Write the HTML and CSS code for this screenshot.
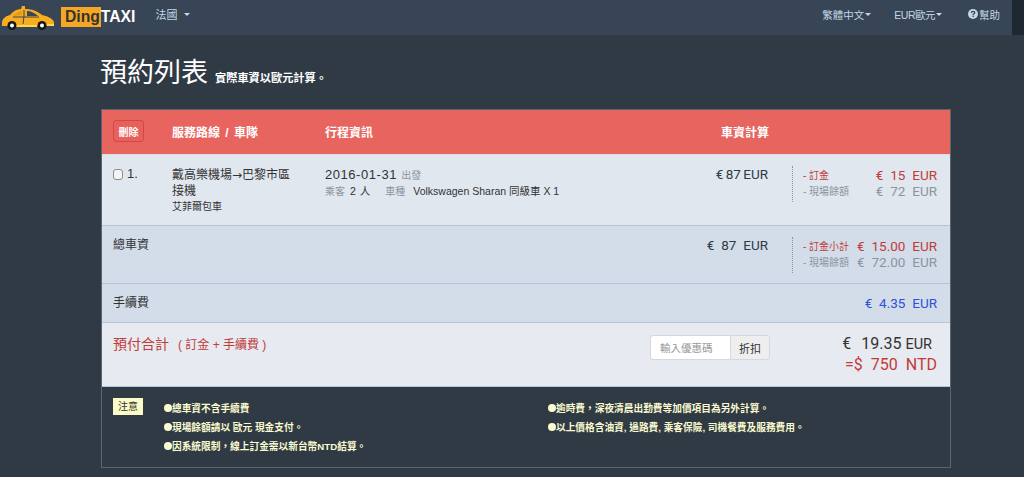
FILE: index.html
```html
<!DOCTYPE html>
<html lang="zh-Hant">
<head>
<meta charset="utf-8">
<title>預約列表</title>
<link rel="stylesheet" href="styles.css">
</head>
<body>
<div class="topbar">
  <nav class="nav">
    <a class="brand">
      <svg class="taxi" width="54" height="28" viewBox="0 0 54 28">
        <path d="M1 20 C2 16 5 14 9 13 C12 9 16 7 20 7 L21 4 L24 4 L24 7 C31 7 36 9 41 13 C46 14 51 16 53 20 L53 24 L1 24 Z" fill="#f7ad1e"/>
        <path d="M26 9 C30 9 34 11 37 14 L26 14 Z" fill="#38465a"/>
        <path d="M12 14 C15 11 18 9.500 21 9 L21 13 L12 14 Z" fill="#e8991a"/>
        <path d="M23 8 L23 14 L22 22 M12 15 L38 15" fill="none" stroke="#38465a" stroke-width="1"/>
        <path d="M14 23 L36 23 L36 25 L14 25 Z M46 22 L53 22 L53 24 L46 24 Z" fill="#ffd84a"/>
        <circle cx="11" cy="23.500" r="4.500" fill="#17171a"/><circle cx="11" cy="23.500" r="2" fill="#fff"/>
        <circle cx="41" cy="23.500" r="4.500" fill="#17171a"/><circle cx="41" cy="23.500" r="2" fill="#fff"/>
      </svg>
      <span class="logo"><span class="logo-ding">Ding</span><span class="logo-taxi">TAXI</span></span>
    </a>
    <a class="nav-link country">法國<i class="caret wide"></i></a>
    <div class="nav-right">
      <a class="nav-link">繁體中文<i class="caret"></i></a>
      <a class="nav-link eur-link">EUR歐元<i class="caret"></i></a>
      <a class="nav-link help-link"><svg class="help" width="10" height="10" viewBox="0 0 10 10"><circle cx="5" cy="5" r="5" fill="#c3d6e4"/><path d="M3.300 3.900 C3.400 2.800 4.100 2.300 5.100 2.300 C6.100 2.300 6.800 2.900 6.800 3.700 C6.800 4.800 5.200 4.800 5.200 6" fill="none" stroke="#374556" stroke-width="1.300"/><rect x="4.500" y="6.600" width="1.400" height="1.300" fill="#374556"/></svg>幫助</a>
    </div>
  </nav>
  <div class="strip"></div>
</div>

<main class="container">
  <h1 class="title">預約列表<small>實際車資以歐元計算。</small></h1>

  <section class="panel">
    <div class="row head">
      <div class="c-check"><button class="del">刪除</button></div>
      <div class="c-route">服務路線 / 車隊</div>
      <div class="c-trip">行程資訊</div>
      <div class="c-fare">車資計算</div>
    </div>

    <div class="row item">
      <div class="c-check num"><span class="box"></span>1.</div>
      <div class="c-route">
        <div class="route-name">戴高樂機場<span class="arrow">→</span>巴黎市區<br>接機</div>
        <div class="route-sub">艾菲爾包車</div>
      </div>
      <div class="c-trip">
        <div class="date">2016-01-31 <span class="muted">出發</span></div>
        <div class="info"><span class="muted">乘客</span><span class="pax">2 人</span><span class="muted gap">車種</span>Volkswagen Sharan 同級車 X 1</div>
      </div>
      <div class="c-fare amount tight">€ 87 EUR</div>
      <div class="c-split">
        <div class="line red"><span>- 訂金</span><b>€ 15 EUR</b></div>
        <div class="line grey"><span>- 現場餘額</span><b>€ 72 EUR</b></div>
      </div>
    </div>

    <div class="row total">
      <div class="c-label">總車資</div>
      <div class="c-fare amount spaced">€ 87 EUR</div>
      <div class="c-split">
        <div class="line red"><span>- 訂金小計</span><b>€ 15.00 EUR</b></div>
        <div class="line grey"><span>- 現場餘額</span><b>€ 72.00 EUR</b></div>
      </div>
    </div>

    <div class="row fee">
      <div class="c-label">手續費</div>
      <div class="fee-val">€ 4.35 EUR</div>
    </div>

    <div class="row pay">
      <div class="pay-label">預付合計<span>( 訂金 + 手續費 )</span></div>
      <div class="coupon"><input class="coupon-input" placeholder="輸入優惠碼"><button class="coupon-btn">折扣</button></div>
      <div class="pay-sum">
        <div class="eur">€<span class="eur-num">19.35</span><span class="eur-cur">EUR</span></div>
        <div class="ntd">=$ 750 NTD</div>
      </div>
    </div>

    <div class="notes">
      <span class="tag">注意</span>
      <ul class="note-col first">
        <li>總車資不含手續費</li>
        <li>現場餘額請以 歐元 現金支付。</li>
        <li>因系統限制，線上訂金需以新台幣NTD結算。</li>
      </ul>
      <ul class="note-col">
        <li>逾時費，深夜清晨出勤費等加價項目為另外計算。</li>
        <li>以上價格含油資, 過路費, 乘客保險, 司機餐費及服務費用。</li>
      </ul>
    </div>
  </section>
</main>
</body>
</html>
```
FILE: styles.css
```css
* { box-sizing: border-box; }
html, body { margin: 0; height: 100%; }
body {
  background: #2f3a45;
  font-family: "Liberation Sans", "Noto Sans CJK TC", sans-serif;
  font-size: 12px;
  color: #333;
  overflow: hidden;
}
.topbar { display: flex; height: 35px; }
.nav { flex: 1; display: flex; align-items: center; background: #374556; color: #c3d6e4; padding-left: 1px; }
.strip { width: 12px; background: #1e2833; }
.brand { display: flex; align-items: center; }
.taxi { display: block; margin-top: -4px; }
.logo { margin-left: 6px; font-size: 15.7px; font-weight: bold; display: flex; margin-top: -1px; }
.logo-ding { background: #f5a623; color: #333; padding: 0 1px 0 4px; height: 20px; line-height: 20px; }
.logo-taxi { color: #fff; line-height: 20px; }
.nav-link { font-size: 10.5px; color: #c3d6e4; display: flex; align-items: center; white-space: nowrap; }
.country { margin-left: 20px; margin-top: -7px; font-size: 11px; }
.nav-right { margin-left: auto; display: flex; gap: 23px; padding-right: 12px; margin-top: -7px; }
.eur-link { letter-spacing: -.5px; }
.help-link { margin-left: 3px; }
.caret { display: inline-block; border-top: 3px solid currentColor; border-left: 3px solid transparent; border-right: 3px solid transparent; margin-left: 1px; }
.caret.wide { margin-left: 7px; }
.help { margin-right: 1px; }

.container { padding: 0 73px 0 100px; }
.title { margin: 20px 0 17px; height: 37px; line-height: 37px; font-size: 27px; font-weight: 400; color: #fff; }
.title small { font-size: 11.2px; font-weight: 700; margin-left: 7px; color: #fff; }

.panel { width: 850px; margin-left: 1px; border: 1px solid #5a6672; }
.row { display: grid; grid-template-columns: 59px 153px 443px 24px 1fr; padding: 0 13px 0 11px; border-bottom: 1px solid #b6c5d5; }
.head { height: 45px; padding-bottom: 2px; background: #e8655f; color: #fff; font-weight: 700; font-size: 12px; align-items: center; border-bottom: 1px solid #d9dfe6; }
.head .c-route { word-spacing: 2px; }
.head .c-trip, .head .c-fare { grid-row: 1; grid-column: 3; }
.head .c-fare { text-align: right; margin-right: -1px; }
.del { width: 31px; height: 22px; padding: 0; background: #e8605a; border: 1px solid #cf4a46; border-radius: 3px; color: #fff; font: 700 10px "Liberation Sans", "Noto Sans CJK TC", sans-serif; }

.item { height: 71px; background: #e1e7ef; padding-top: 11px; }
.item .c-trip, .item .c-fare { grid-row: 1; grid-column: 3; }
.item .c-route { padding-top: 1px; }
.item .c-trip { padding-top: 1px; }
.amount { text-align: right; color: #2f3a45; font-family: Roboto, "Noto Sans CJK TC", sans-serif; font-size: 13.500px; line-height: 17px; }
.tight { word-spacing: -1px; }
.spaced { word-spacing: 3.500px; }
.num { font-size: 13px; display: flex; align-items: flex-start; gap: 4px; color: #333; line-height: 15px; }
.box { width: 10px; height: 11px; margin-top: 3px; background: #f4f4f4; border: 1px solid #8c8c8c; border-radius: 3px; flex: none; }
.route-name { font-size: 12px; line-height: 16px; color: #333; }
.arrow { font-family: "DejaVu Sans", sans-serif; font-size: 12px; }
.route-sub { font-size: 10px; line-height: 14px; color: #333; margin-top: 1px; }
.date { font-size: 13px; line-height: 16px; letter-spacing: .55px; color: #333; }
.info { font-size: 10.5px; line-height: 14px; color: #333; }
.muted { color: #8a94a0; font-size: 10px; letter-spacing: 0; }
.pax { margin-left: 5px; word-spacing: 1px; }
.gap { margin-left: 15px; margin-right: 8px; }

.c-split { grid-column: 5; border-left: 1px dotted #8a94a0; padding: 1px 0 0 10px; height: 36px; }
.line { display: flex; justify-content: space-between; align-items: center; height: 16px; font-size: 10px; }
.line span { margin-top: -2px; }
.line b { font-family: Roboto, "Noto Sans CJK TC", sans-serif; font-weight: 400; font-size: 13.500px; word-spacing: 3.500px; }
.red { color: #c23a3a; }
.grey { color: #8a94a0; }

.total { height: 58px; background: #d2dde9; padding-top: 11px; }
.c-label { font-size: 12px; color: #333; line-height: 17px; }
.total .c-label { grid-column: 1 / 3; grid-row: 1; }
.total .c-fare { grid-column: 3; grid-row: 1; }
.total .c-split { grid-row: 1; }

.fee { height: 39px; padding-top: 1px; background: #d2dde9; align-items: center; display: flex; justify-content: space-between; }
.fee-val { color: #2f50d8; font-family: Roboto, "Noto Sans CJK TC", sans-serif; font-size: 13.500px; word-spacing: 3.500px; margin-top: -2px; }

.pay { height: 64px; background: #e7eaf0; display: flex; align-items: flex-start; padding-top: 12px; }
.pay-label { color: #c23a3a; font-size: 14px; line-height: 18px; width: 537px; }
.pay-label span { font-size: 12px; margin-left: 9px; }
.coupon { display: flex; height: 25px; width: 120px; }
.coupon-input { width: 80px; height: 25px; border: 1px solid #d5d9de; border-right: 0; border-radius: 3px 0 0 3px; padding: 0 9px; font: 10.5px "Liberation Sans", "Noto Sans CJK TC", sans-serif; background: #fff; }
.coupon-input::placeholder { color: #999; }
.coupon-btn { width: 40px; height: 25px; padding: 0; border: 1px solid #d5d9de; border-radius: 0 3px 3px 0; background: #eee; color: #333; font: 11px "Liberation Sans", "Noto Sans CJK TC", sans-serif; }
.pay-sum { flex: 1; text-align: right; font-family: Roboto, "Noto Sans CJK TC", sans-serif; margin-top: -1px; }
.eur { font-size: 16px; line-height: 20px; color: #333; padding-right: 5px; }
.eur-num { margin-left: 10px; }
.eur-cur { margin-left: 4px; font-size: 14.500px; }
.ntd { font-size: 16px; line-height: 20px; color: #c23a3a; word-spacing: 4px; }

.notes { height: 80px; display: flex; padding: 12px 0 0 11px; color: #fbfbd0; font-size: 9.700px; font-weight: 700; }
.tag { width: 30px; height: 17px; line-height: 17px; text-align: center; background: #fbfbc8; color: #333; font-size: 10px; font-weight: 400; margin-top: -1px; }
.note-col { margin: 0; padding: 0; list-style: none; }
.note-col li { line-height: 19px; display: flex; align-items: center; }
.note-col li::before { content: ""; width: 8px; height: 8px; border-radius: 50%; background: #fbfbd0; margin-top: -2px; flex: none; }
.note-col.first { margin-left: 21px; width: 384px; }
```
